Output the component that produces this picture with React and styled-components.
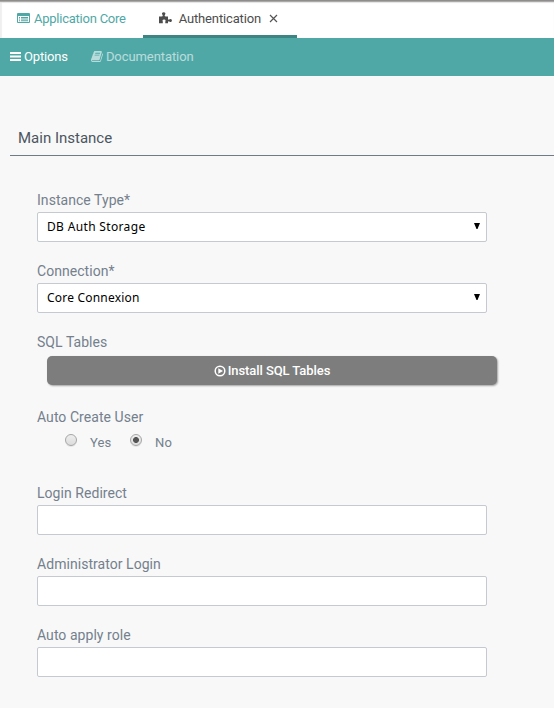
import React, { useState } from "react";
import styled, { createGlobalStyle, css } from "styled-components";

const GlobalStyle = createGlobalStyle`
  * { box-sizing: border-box; }
  body {
    margin: 0;
    background: #f8f8f8;
    font-family: Roboto, "Liberation Sans", sans-serif;
    overflow: hidden;
  }
`;

const Page = styled.div`
  height: 708px;
  overflow: hidden;
`;

const TabBar = styled.nav`
  display: flex;
  height: 38px;
  background: #fff;
  box-shadow: inset 0 1px 0 #8f8c8c, inset 0 2px 0 #aaa8a8, inset 0 3px 1px #e4e4e4, inset 2px 0 1px #f0f0f0;
`;

const Tab = styled.a`
  display: flex;
  align-items: center;
  height: 38px;
  padding: 0 17px 2px;
  font-size: 13px;
  white-space: nowrap;
  color: #4fa8a6;
  ${(p) =>
    p.$active &&
    css`
      width: 154px;
      color: #4d4d4d;
      border-bottom: 3px solid #3d8583;
      padding: 1px 16px 0;
    `}
`;

const TabText = styled.span`
  margin-left: ${(p) => p.$gap}px;
  letter-spacing: ${(p) => p.$spacing || 0}px;
`;

const CloseIcon = styled.svg`
  flex: none;
  margin-left: 8px;
  width: 9px;
  height: 9px;
`;

const Toolbar = styled.div`
  display: flex;
  align-items: center;
  height: 38px;
  padding: 0 0 2px 10px;
  gap: 23px;
  background: #4fa8a6;
`;

const ToolItem = styled.a`
  display: flex;
  align-items: center;
  gap: 3px;
  font-size: 13px;
  color: #fff;
  opacity: ${(p) => (p.$muted ? 0.6 : 1)};
  letter-spacing: ${(p) => (p.$muted ? -0.08 : -0.15)}px;
`;

const Heading = styled.h1`
  margin: 44px 0 0 10px;
  height: 36px;
  padding-left: 8px;
  border-bottom: 1px solid #6f7c88;
  font-size: 15px;
  line-height: 36px;
  font-weight: 400;
  letter-spacing: 0;
  color: #4b5560;
`;

const Form = styled.form`
  display: flex;
  flex-direction: column;
  width: 450px;
  margin: 34px 0 0 37px;
`;

const Field = styled.div`
  height: ${(p) => p.$height || 71}px;
`;

const Label = styled.label`
  display: block;
  height: 22px;
  line-height: 20px;
  font-size: 14px;
  letter-spacing: 0.05px;
  color: #74808d;
`;

const boxStyle = css`
  display: flex;
  width: 450px;
  height: 30px;
  border: 1px solid #c5cad1;
  border-radius: 2px;
  background: #fff;
`;

const Input = styled.input`
  ${boxStyle}
  padding: 0 9px;
  outline: none;
`;

const Select = styled.div`
  ${boxStyle}
  align-items: center;
  justify-content: space-between;
  padding: 0 6px 2px 9px;
  font: 12px "Noto Sans", sans-serif;
  letter-spacing: ${(p) => p.$spacing}px;
  color: #000;
`;

const Button = styled.button`
  display: flex;
  align-items: center;
  justify-content: center;
  gap: 2px;
  width: 450px;
  height: 29px;
  margin: 2px 0 0 10px;
  padding: 0;
  border: 0;
  border-radius: 5px;
  background: #7d7d7d;
  box-shadow: 1px 1px 2px rgba(0, 0, 0, 0.35);
  color: #fff;
  font: 500 13px Roboto, sans-serif;
  letter-spacing: -0.08px;
`;

const Radios = styled.div`
  display: flex;
  height: 24px;
  padding-left: 28px;
  font-size: 13px;
  color: #74808d;
`;

const Choice = styled.label`
  display: flex;
  width: 65px;
  line-height: 27px;
  letter-spacing: 0.15px;
`;

const Dot = styled.span`
  width: 12px;
  height: 12px;
  margin: 5px 13px 0 0;
  border: 1px solid #a6a6a6;
  border-radius: 50%;
  background: ${(p) =>
    p.$checked
      ? "radial-gradient(circle, #555 0 2.6px, transparent 3.3px), linear-gradient(#eee, #ddd)"
      : "linear-gradient(#eee, #dcdcdc)"};
  box-shadow: 0 1px 0 #e6e6e6;
`;

const Icon = styled.svg`
  display: block;
  flex: none;
  fill: currentColor;
`;

const ListIcon = () => (
  <Icon width="13" height="10" viewBox="0 0 13 10">
    <path fillRule="evenodd" d="M1 0h11q1 0 1 1v8q0 1-1 1H1Q0 10 0 9V1Q0 0 1 0zM1 3v6h11V3zM2 4h1v1H2zm2 0h7v1H4zM2 5.6h1v1H2zm2 0h7v1H4zM2 7.2h1v1H2zm2 0h7v1H4z" />
  </Icon>
);

const PuzzleIcon = () => (
  <Icon width="13" height="12" viewBox="0 0 13 12">
    <path d="M0 4.500h2.500q1.300 0 1.300-.8L3.300 2.600Q2.800 1.900 3.100 1.100 3.500.3 4.700.3t1.600.8q.3.8-.2 1.500l-.5 1.100q0 .8 1.300.8H9v2.300q0 .9.700.9l1-.5q.9-.4 1.600.1.600.5.600 1.200t-.6 1.200q-.7.500-1.600.1l-1-.5q-.7 0-.7.9V11.200H6.300v-1.500l.3-1.100Q6.500 7.500 5.100 7.400q-1.500.1-1.600 1.200l.3 1.100v1.500H0z" />
  </Icon>
);

const BarsIcon = () => (
  <Icon width="11" height="11" viewBox="0 0 11 11">
    <path d="M0 1h11v2H0zM0 4.500h11v2H0zM0 8h11v2H0z" />
  </Icon>
);

const BookIcon = () => (
  <Icon width="12" height="13" viewBox="0 0 1664 1792">
    <path d="M1639 478q40 57 18 129l-275 906q-19 64-76.5 107.500t-122.500 43.500h-923q-77 0-148.500-53.500t-99.500-131.500q-24-67-2-127 0-4 3-27t4-37q1-8-3-21.500t-3-19.500q2-11 8-21t16.500-23.500 16.500-23.500q23-38 45-91.500t30-91.500q3-10 .5-30t-.5-28q3-11 17-28t17-23q21-36 42-92t25-90q1-9-2.500-32t.5-28q4-13 22-30.500t22-22.500q19-26 42.500-84.500t27.500-96.500q1-8-3-25.500t-2-26.500q2-8 9-18t18-23 17-21q8-12 16.500-30.500t15-35 16-36 19.500-32 26.500-23.500 36-11.500 47.500 5.500l-1 3q38-9 51-9h761q74 0 114 56t18 130l-274 906q-36 119-71.500 153.500t-128.500 34.500h-869q-27 0-38 15-11 16-1 43 24 70 144 70h923q29 0 56-15.500t35-41.500l300-987q7-22 5-57 38 15 59 43zm-1064 2q-4 13 2 22.500t20 9.500h608q13 0 25.500-9.500t16.500-22.500l21-64q4-13-2-22.500t-20-9.500h-608q-13 0-25.500 9.500t-16.500 22.500zm-83 256q-4 13 2 22.500t20 9.500h608q13 0 25.500-9.500t16.500-22.500l21-64q4-13-2-22.500t-20-9.500h-608q-13 0-25.500 9.500t-16.500 22.500z" />
  </Icon>
);

const PlayIcon = () => (
  <Icon width="12" height="12" viewBox="0 0 12 12">
    <circle cx="6" cy="6" r="4.800" fill="none" stroke="currentColor" strokeWidth="1.500" />
    <path d="M4.300 3.200 9 6 4.300 8.800z" />
  </Icon>
);

const ArrowIcon = () => (
  <Icon width="6" height="6" viewBox="0 0 6 6">
    <path d="M0 0h6L3.500 6h-1z" />
  </Icon>
);

const SelectField = ({ label, value, spacing }) => (
  <Field>
    <Label>{label}</Label>
    <Select role="combobox" $spacing={spacing}>
      <span>{value}</span>
      <ArrowIcon />
    </Select>
  </Field>
);

const TextField = ({ label }) => (
  <Field>
    <Label>{label}</Label>
    <Input aria-label={label} />
  </Field>
);

export default function App() {
  const [autoCreate, setAutoCreate] = useState("No");
  return (
    <Page>
      <GlobalStyle />
      <TabBar>
        <Tab>
          <ListIcon />
          <TabText $gap={4} $spacing={-0.24}>Application Core</TabText>
        </Tab>
        <Tab $active>
          <PuzzleIcon />
          <TabText $gap={7} $spacing={-0.15}>Authentication</TabText>
          <CloseIcon viewBox="0 0 9 9">
            <path d="M1 1l7 7M8 1L1 8" stroke="#555" strokeWidth="1.200" />
          </CloseIcon>
        </Tab>
      </TabBar>
      <Toolbar>
        <ToolItem><BarsIcon />Options</ToolItem>
        <ToolItem $muted><BookIcon />Documentation</ToolItem>
      </Toolbar>
      <Heading>Main Instance</Heading>
      <Form>
        <SelectField label="Instance Type*" value="DB Auth Storage" spacing={0.34} />
        <SelectField label="Connection*" value="Core Connexion" spacing={0.2} />
        <Field $height={75}>
          <Label>SQL Tables</Label>
          <Button type="button"><PlayIcon />Install SQL Tables</Button>
        </Field>
        <Field $height={76}>
          <Label>Auto Create User</Label>
          <Radios>
            {["Yes", "No"].map((option) => (
              <Choice key={option} onClick={() => setAutoCreate(option)}>
                <Dot $checked={autoCreate === option} />
                {option}
              </Choice>
            ))}
          </Radios>
        </Field>
        <TextField label="Login Redirect" />
        <TextField label="Administrator Login" />
        <TextField label="Auto apply role" />
      </Form>
    </Page>
  );
}
